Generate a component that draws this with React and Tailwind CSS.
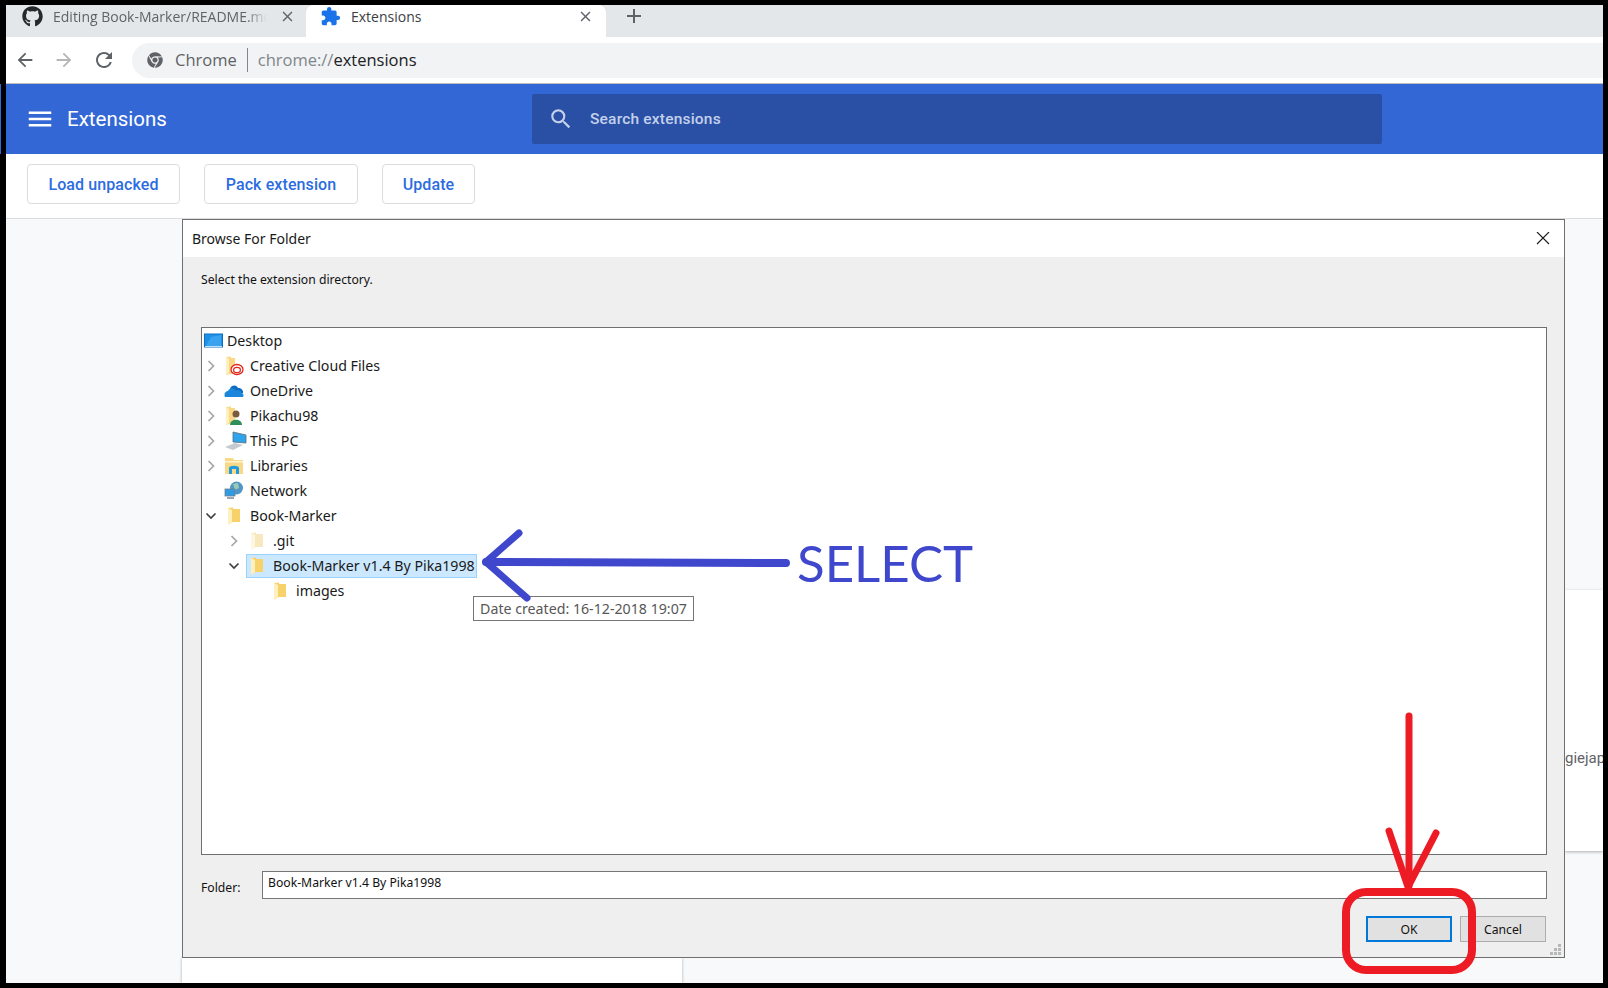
import { FaGithub, FaChrome } from "react-icons/fa";
import { MdExtension, MdArrowBack, MdArrowForward, MdRefresh, MdClose, MdAdd, MdMenu, MdSearch } from "react-icons/md";

const uiFont = "font-['Open_Sans','Noto_Sans',sans-serif]";

function FolderIcon({ pale }) {
  return (
    <svg width="14" height="18" viewBox="0 0 14 18">
      <path d="M1 1 L6 0.5 L6 2 L13 2 L13 15 L6 15 L1 17.5 Z" fill={pale ? "#f8e8bd" : "#f7d26a"} />
      <path d="M1 1 L5 3 L5 15.5 L1 17.5 Z" fill={pale ? "#fdf6e0" : "#fff0bd"} />
    </svg>
  );
}

function TreeIcon({ type }) {
  if (type === "desktop")
    return (
      <svg width="19" height="16" viewBox="0 0 19 16">
        <rect x="0.5" y="1" width="18" height="13" fill="#1e90e8" stroke="#0c6fc0" />
        <path d="M2 13 L7 4 L17 2 L17 13 Z" fill="#3aa3f0" />
        <rect x="1" y="13" width="17" height="1" fill="#bfe0f8" />
      </svg>
    );
  if (type === "cloudfiles")
    return (
      <svg width="20" height="20" viewBox="0 0 20 20">
        <path d="M2 1 L7 0.5 L7 2 L11 2 L11 17 L2 19 Z" fill="#f9d988" />
        <path d="M2 1 L5 3 L5 17 L2 19 Z" fill="#fff0bd" />
        <ellipse cx="13" cy="13.5" rx="6" ry="5" fill="#fff" stroke="#e2231a" strokeWidth="1.3" />
        <ellipse cx="13" cy="14" rx="3.4" ry="2.6" fill="none" stroke="#e2231a" strokeWidth="1.2" />
      </svg>
    );
  if (type === "onedrive")
    return (
      <svg width="20" height="14" viewBox="0 0 20 14">
        <path d="M6 4.5 C7.5 0.5 13 0.5 14 4 C17 3.5 19.5 6 19 9 L12 9 Z" fill="#0f6cc0" />
        <path d="M1 13 C-0.5 10 1.5 7 4 7 C5.5 3.5 10 3.5 11.5 6.5 C14 5 17 6.5 17.5 9 C19.5 9.5 20 11.5 19 13 Z" fill="#1a86dc" />
      </svg>
    );
  if (type === "user")
    return (
      <svg width="20" height="20" viewBox="0 0 20 20">
        <path d="M2 1 L7 0.5 L7 2 L11 2 L11 16 L2 19 Z" fill="#f9d988" />
        <path d="M2 1 L5 3 L5 17 L2 19 Z" fill="#fff0bd" />
        <circle cx="12" cy="8" r="3.5" fill="#7a5a3c" />
        <path d="M6 19 C6 12 18 12 18 19 Z" fill="#2f8f5b" />
      </svg>
    );
  if (type === "pc")
    return (
      <svg width="24" height="20" viewBox="0 0 24 20">
        <path d="M9 1 L22 4 L22 12 L9 11 Z" fill="#2fa4ea" stroke="#5e6c78" strokeWidth="0.8" />
        <path d="M1 16 L11 12 L19 14 L9 19 Z" fill="#c3cbd1" />
      </svg>
    );
  if (type === "libraries")
    return (
      <svg width="20" height="18" viewBox="0 0 20 18">
        <path d="M1 1 L9 1 L10 3 L19 3 L19 17 L1 17 Z" fill="#f9d988" />
        <path d="M1 4 L19 4 L19 5.5 L1 5.5 Z" fill="#fff4cf" />
        <path d="M5 17 L5 11 C5 8 15 8 15 11 L15 17 L12 17 L12 12 L8 12 L8 17 Z" fill="#1f9be0" />
      </svg>
    );
  if (type === "network")
    return (
      <svg width="20" height="20" viewBox="0 0 20 20">
        <circle cx="12.5" cy="7" r="6.5" fill="#4f97c9" />
        <path d="M9 3 L14 2 L15 7 L11 9 Z" fill="#9acbb0" />
        <rect x="1" y="8" width="10" height="7" fill="#2f9be4" stroke="#71818d" strokeWidth="0.8" />
        <rect x="3" y="16" width="7" height="2" fill="#9aa6ae" />
      </svg>
    );
  return <FolderIcon pale={type === "pale"} />;
}

function Chevron({ open }) {
  return (
    <svg className="mr-[6px]" width="12" height="12" viewBox="0 0 12 12" fill="none" strokeWidth="1.7" stroke={open ? "#404040" : "#a6a6a6"}>
      {open ? <path d="M1.5 3.5 L6 8 L10.5 3.5" /> : <path d="M3.5 1 L8.5 6 L3.5 11" />}
    </svg>
  );
}

const rows = [
  { label: "Desktop", icon: "desktop", indent: "w-0", iconBox: "w-[24px] pl-[1px]" },
  { label: "Creative Cloud Files", icon: "cloudfiles", chevron: "closed", indent: "w-[21px]" },
  { label: "OneDrive", icon: "onedrive", chevron: "closed", indent: "w-[21px]" },
  { label: "Pikachu98", icon: "user", chevron: "closed", indent: "w-[21px]" },
  { label: "This PC", icon: "pc", chevron: "closed", indent: "w-[21px]" },
  { label: "Libraries", icon: "libraries", chevron: "closed", indent: "w-[21px]" },
  { label: "Network", icon: "network", indent: "w-[21px]" },
  { label: "Book-Marker", icon: "folder", chevron: "open", indent: "w-[21px]", iconBox: "w-[26px] pl-[3px]" },
  { label: ".git", icon: "pale", chevron: "closed", indent: "w-[44px]", iconBox: "w-[26px] pl-[3px]" },
  { label: "Book-Marker v1.4 By Pika1998", icon: "folder", chevron: "open", indent: "w-[44px]", iconBox: "w-[26px] pl-[3px]", selected: true },
  { label: "images", icon: "folder", indent: "w-[67px]", iconBox: "w-[26px] pl-[3px]" },
];

function TreeRow({ row }) {
  return (
    <div className="flex h-[25px] items-center">
      <div className={`flex h-full shrink-0 items-center justify-end ${row.indent}`}>
        {row.chevron && <Chevron open={row.chevron === "open"} />}
      </div>
      <div
        className={`flex h-[24px] items-center border pr-[1px] ${
          row.selected ? "border-[#99d1ff] bg-[#cce8ff]" : "border-transparent"
        }`}
      >
        <div className={`flex shrink-0 items-center ${row.iconBox || "w-[26px]"}`}>
          <TreeIcon type={row.icon} />
        </div>
        <span className="whitespace-nowrap text-[14.2px] text-[#1a1a1a]">{row.label}</span>
      </div>
    </div>
  );
}

// hand drawn paint annotations on top of the screenshot
function Annotations() {
  return (
    <svg className="pointer-events-none absolute left-0 top-0" width="1608" height="988" fill="none" strokeLinecap="round" strokeLinejoin="round">
      <g stroke="#3f48cc" strokeWidth="7">
        <path d="M486 562 L786 563" strokeWidth="8" />
        <path d="M519 533 L486 562 L527 598" />
      </g>
      <g stroke="#ed1c24">
        <path d="M1409 716 L1409 886" strokeWidth="7" />
        <path d="M1389 831 L1408 887 L1436 833" strokeWidth="7" />
        <rect x="1346" y="892" width="126" height="78" rx="20" strokeWidth="8" />
      </g>
    </svg>
  );
}

export default function App() {
  return (
    <div className="relative h-[988px] w-[1608px] overflow-hidden bg-black">
      {/* sliver of the header left of the black frame */}
      <div className="absolute left-0 top-[84px] h-[70px] w-px bg-[#3367d6]" />
      <div className={`absolute bottom-[5px] left-[6px] right-[5px] top-[5px] flex flex-col overflow-hidden bg-white ${uiFont}`}>
        {/* tab strip */}
        <div className="flex h-[32px] shrink-0 bg-[#e4e7ea]">
          <div className="flex w-[300px] items-center pb-[10px] pl-[16px] pr-[10px]">
            <FaGithub className="shrink-0 text-[#24292e]" size={21} />
            <div className="ml-[10px] flex-1 overflow-hidden whitespace-nowrap text-[14px] text-[#5f6368] [mask-image:linear-gradient(to_right,black_90%,transparent)]">Editing Book-Marker/README.md</div>
            <MdClose className="ml-3 shrink-0 text-[#5f6368]" size={17} />
          </div>
          <div className="flex w-[300px] items-center rounded-t-[8px] bg-white pb-[10px] pl-[14px] pr-[12px]">
            <MdExtension className="shrink-0 text-[#1a73e8]" size={21} />
            <div className="ml-[10px] flex-1 text-[14px] text-[#3c4043]">Extensions</div>
            <MdClose className="text-[#5f6368]" size={17} />
          </div>
          <div className="flex items-center pb-[10px] pl-[16px]">
            <MdAdd className="text-[#5f6368]" size={24} />
          </div>
        </div>
        {/* toolbar */}
        <div className="flex h-[47px] shrink-0 items-center border-b border-[#bdbdbd] bg-white">
          <div className="flex w-[126px] shrink-0 items-center gap-[17px] pl-[8px] text-[#5f6368]">
            <MdArrowBack size={22} />
            <MdArrowForward className="text-[#b4b6b8]" size={22} />
            <MdRefresh size={24} />
          </div>
          <div className="flex h-[35px] flex-1 items-center rounded-l-[18px] bg-[#f1f3f4] pl-[15px] text-[16.5px]">
            <FaChrome className="text-[#5f6368]" size={16} />
            <span className="ml-[12px] text-[#5f6368]">Chrome</span>
            <span className="mx-[10px] h-[24px] w-px bg-[#80868b]" />
            <span className="text-[#80868b]">chrome://</span>
            <span className="text-[#202124]">extensions</span>
          </div>
        </div>
        {/* header */}
        <div className="flex h-[70px] shrink-0 items-center bg-[#3367d6] font-['Roboto',sans-serif]">
          <MdMenu className="ml-[19px] text-white" size={30} />
          <div className="ml-[12px] w-[465px] text-[20.5px] text-white">Extensions</div>
          <div className="flex h-[50px] w-[850px] items-center rounded-[2px] bg-[#2a50a6] pl-[16px] text-[15.5px] text-[#c4d0ea]">
            <MdSearch size={26} />
            <span className="ml-[16px] pt-[1px] font-medium tracking-[0.2px]">Search extensions</span>
          </div>
        </div>
        {/* dev tools bar */}
        <div className="flex h-[65px] shrink-0 items-start gap-[24px] border-b border-[#dadce0] pl-[21px] pt-[10px] font-['Roboto',sans-serif]">
          <button className="h-[40px] w-[153px] rounded-[4px] border border-[#dadce0] pt-[1px] text-[16px] font-medium tracking-[0.1px] text-[#2b6de0]">Load unpacked</button>
          <button className="h-[40px] w-[154px] rounded-[4px] border border-[#dadce0] pt-[1px] text-[16px] font-medium tracking-[0.1px] text-[#2b6de0]">Pack extension</button>
          <button className="h-[40px] w-[93px] rounded-[4px] border border-[#dadce0] pt-[1px] text-[16px] font-medium tracking-[0.1px] text-[#2b6de0]">Update</button>
        </div>
        {/* page behind the dialog */}
        <div className="relative flex-1 bg-[#f8f9fa]">
          <div className="absolute left-[1559px] right-0 top-[371px] flex h-[261px] items-center bg-white pt-[76px] shadow-[0_1px_3px_rgba(0,0,0,0.3)]">
            <span className="whitespace-nowrap font-['Roboto',sans-serif] text-[15px] text-[#5f6368]">giejap</span>
          </div>
          <div className="absolute bottom-0 left-[176px] h-[26px] w-[500px] bg-white shadow-[0_1px_3px_rgba(0,0,0,0.3)]" />
        </div>
      </div>

      {/* folder picker */}
      <div className="absolute left-[182px] top-[219px] flex h-[739px] w-[1383px] flex-col border border-[#6f6f6f] bg-[#efefef] font-['Noto_Sans',sans-serif]">
        <div className="flex h-[37px] shrink-0 items-center justify-between bg-white pl-[9px] pr-[14px] text-[14px] text-[#1a1a1a]">
          <span>Browse For Folder</span>
          <svg width="14" height="14" viewBox="0 0 14 14" stroke="#1a1a1a" strokeWidth="1.1">
            <path d="M1 0 L13 12 M13 0 L1 12" />
          </svg>
        </div>
        <div className="flex flex-1 flex-col pl-[18px] pr-[17px]">
          <div className="flex h-[45px] shrink-0 items-center pt-[2px] text-[12.2px] text-[#111]">Select the extension directory.</div>
          <div className="mt-[25px] h-[528px] shrink-0 border border-[#6f6f6f] bg-white">
            {rows.map((row) => (
              <TreeRow key={row.label} row={row} />
            ))}
          </div>
          <div className="mt-[16px] flex h-[28px] shrink-0 items-center">
            <span className="mt-[7px] w-[61px] text-[12.2px] text-[#111]">Folder:</span>
            <div className="h-full flex-1 border border-[#767676] bg-white pl-[5px] pt-[1px] text-[12.2px] leading-[20px] text-[#111]">Book-Marker v1.4 By Pika1998</div>
          </div>
          <div className="mr-[1px] mt-[17px] flex justify-end gap-[8px]">
            <button className="h-[26px] w-[86px] border-2 border-[#0078d7] bg-[#e1e1e1] pt-[2px] text-[12.2px] text-[#111]">OK</button>
            <button className="h-[26px] w-[86px] border border-[#adadad] bg-[#e1e1e1] pt-[2px] text-[12.2px] text-[#111]">Cancel</button>
          </div>
        </div>
        {/* resize grip */}
        <svg className="absolute bottom-[1px] right-[2px]" width="12" height="12" viewBox="0 0 12 12" fill="#b8b8b8">
          <rect x="8" y="0" width="3" height="3" />
          <rect x="4" y="4" width="3" height="3" />
          <rect x="8" y="4" width="3" height="3" />
          <rect x="0" y="8" width="3" height="3" />
          <rect x="4" y="8" width="3" height="3" />
          <rect x="8" y="8" width="3" height="3" />
        </svg>
      </div>

      {/* tooltip */}
      <div className="absolute left-[473px] top-[596px] flex h-[25px] w-[221px] items-center justify-center border border-[#767676] bg-white font-['Noto_Sans',sans-serif] text-[14.2px] text-[#575757]">
        Date created: 16-12-2018 19:07
      </div>

      <Annotations />
      <div className="absolute left-[797px] top-[531px] font-['Lato',sans-serif] text-[51px] leading-[64px] text-[#3f48cc]">SELECT</div>
    </div>
  );
}
